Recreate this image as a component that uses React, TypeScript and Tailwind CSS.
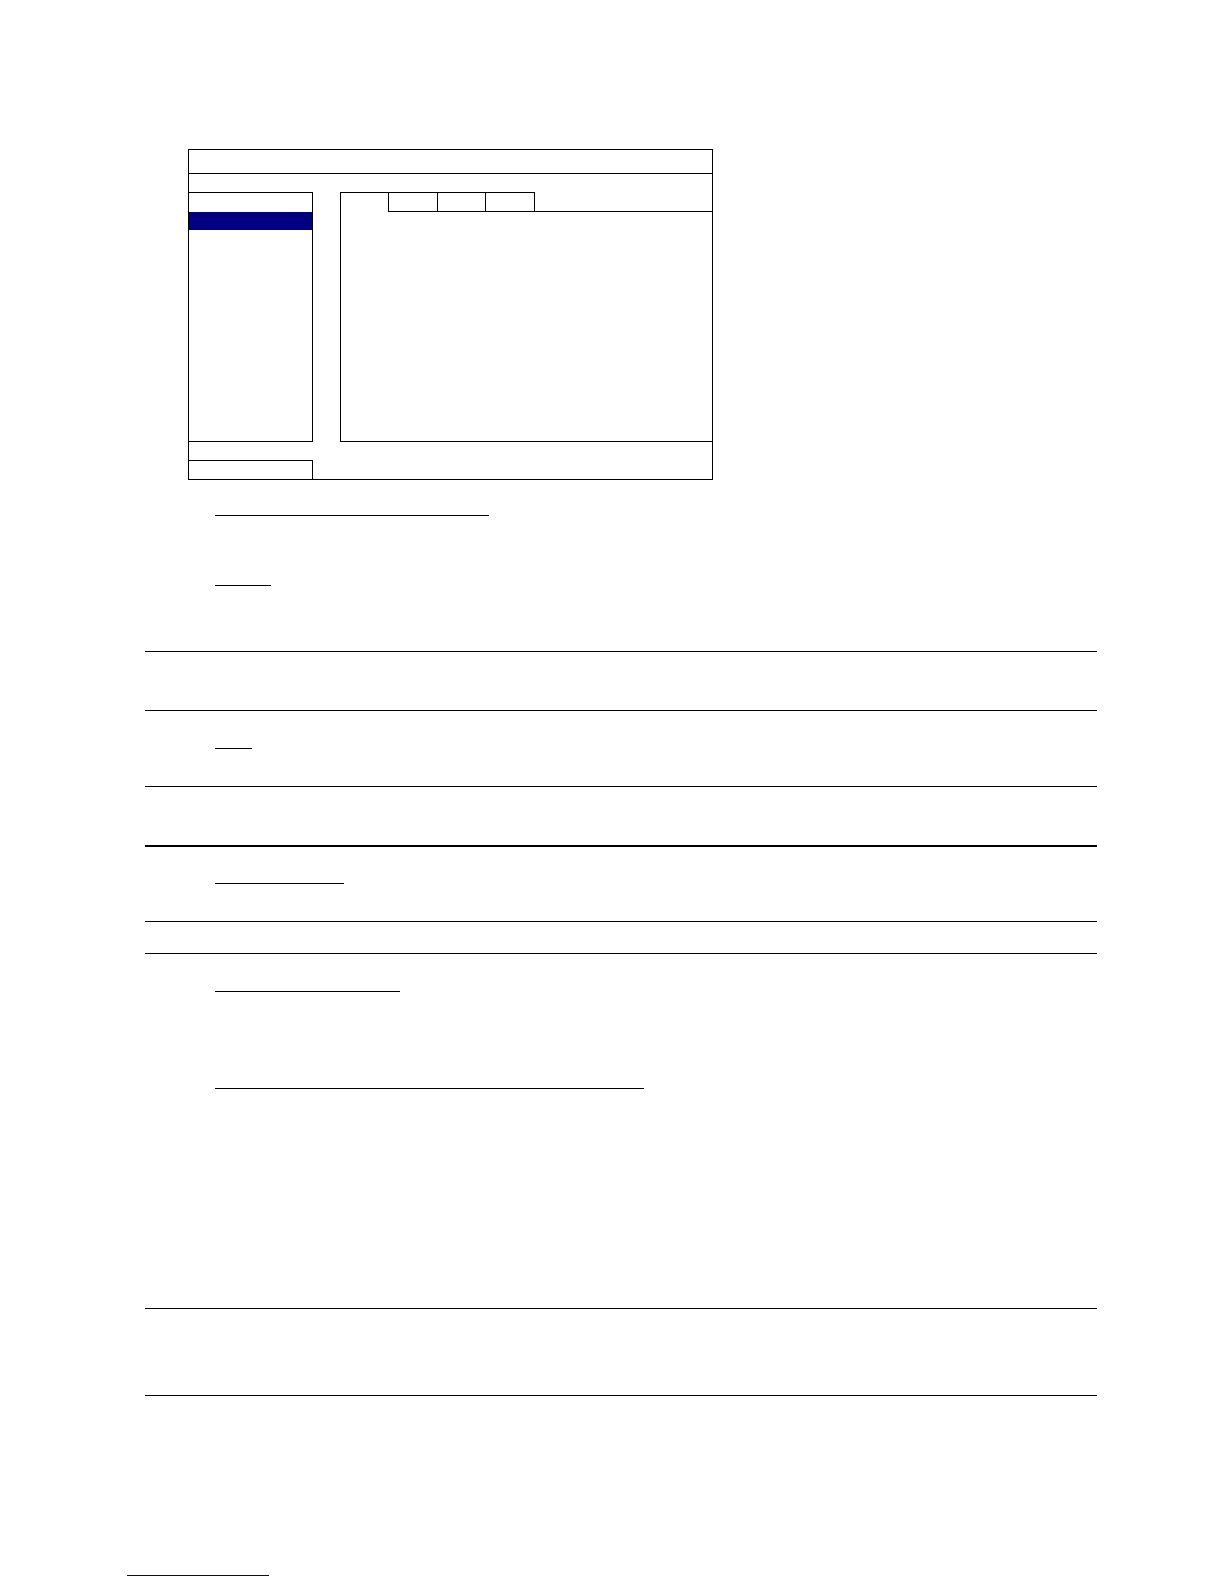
import React from 'react';

// Horizontal rule spanning the text column
const Rule: React.FC<{ mt: string; thick?: boolean }> = ({ mt, thick }) => (
    <div className={`${mt} ml-[145px] w-[952px] ${thick ? 'h-[2px]' : 'h-px'} bg-black`} />
);

// Short underline left by a heading
const Under: React.FC<{ mt: string; w: string }> = ({ mt, w }) => (
    <div className={`${mt} ml-[215px] ${w} h-px bg-black`} />
);

const Tab: React.FC<{ w: string; last?: boolean }> = ({ w, last }) => (
    <div className={`${w} h-full border-t border-l border-b border-black ${last ? 'border-r' : ''}`} />
);

const MenuFrame: React.FC = () => (
    <div className="ml-[188px] w-[525px] h-[331px] border border-black flex flex-col">
        <div className="h-[24px] border-b border-black shrink-0" />
        <div className="pt-[18px] flex shrink-0">
            <div className="w-[124px] h-[250px] border-t border-b border-r border-black flex flex-col">
                <div className="h-[19px]" />
                <div className="h-[18px] bg-[#000080]" />
            </div>
            <div className="ml-[27px] flex-1 h-[250px] border-l border-b border-black flex flex-col">
                <div className="h-[20px] flex">
                    <div className="w-[47px] h-full border-t border-black" />
                    <Tab w="w-[49px]" />
                    <Tab w="w-[48px]" />
                    <Tab w="w-[50px]" last />
                    <div className="flex-1 h-full border-b border-black" />
                </div>
            </div>
        </div>
        <div className="mt-[18px] w-[124px] flex-1 border-t border-r border-black" />
    </div>
);

export default function App() {
    return (
        <div className="w-[1224px] h-[1584px] bg-white overflow-hidden pt-[149px] font-['Liberation_Serif',serif]">
            <MenuFrame />
            <Under mt="mt-[35px]" w="w-[274px]" />
            <Under mt="mt-[69px]" w="w-[56px]" />
            <Rule mt="mt-[65px]" />
            <Rule mt="mt-[58px]" />
            <Under mt="mt-[37px]" w="w-[37px]" />
            <Rule mt="mt-[37px]" />
            <Rule mt="mt-[58px]" thick />
            <Under mt="mt-[36px]" w="w-[129px]" />
            <Rule mt="mt-[37px]" />
            <Rule mt="mt-[31px]" />
            <Under mt="mt-[37px]" w="w-[185px]" />
            <Under mt="mt-[96px]" w="w-[429px]" />
            <Rule mt="mt-[219px]" />
            <Rule mt="mt-[86px]" />
            <div className="mt-[179px] ml-[127px] w-[142px] h-px bg-[#000080]" />
        </div>
    );
}
